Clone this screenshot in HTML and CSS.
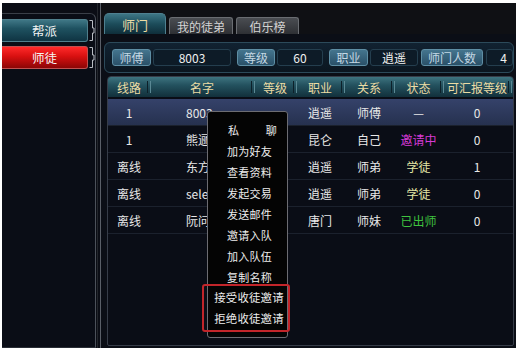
FILE: index.html
```html
<!DOCTYPE html>
<html lang="zh">
<head>
<meta charset="utf-8">
<link rel="stylesheet" href="styles.css">
</head>
<body>
<div class="screen">
  <aside class="side">
    <div class="side-box">
      <div class="nav-row">
        <div class="nav-btn teal">帮派</div>
        <svg class="bracket" width="6" height="23" viewBox="0 0 6 23"><path d="M0.5 1.5 H3.5 V9 H5 V14 H3.5 V21.5 H0.5" fill="none" stroke="#b8bcc2" stroke-width="1"/></svg>
      </div>
      <div class="nav-row">
        <div class="nav-btn red">师徒</div>
        <svg class="bracket" width="6" height="23" viewBox="0 0 6 23"><path d="M0.5 1.5 H3.5 V9 H5 V14 H3.5 V21.5 H0.5" fill="none" stroke="#b8bcc2" stroke-width="1"/></svg>
      </div>
    </div>
  </aside>
  <div class="gutter"></div>
  <main class="main">
    <div class="tabs">
      <div class="tab active">师门</div>
      <div class="tab">我的徒弟</div>
      <div class="tab">伯乐榜</div>
    </div>
    <div class="info">
      <span class="lbl w39">师傅</span>
      <span class="val w78">8003</span>
      <span class="lbl w38 ml">等级</span>
      <span class="val w46">60</span>
      <span class="lbl w39 ml">职业</span>
      <span class="val w48">逍遥</span>
      <span class="lbl w62">师门人数</span>
      <span class="val w27 right">4</span>
    </div>
    <div class="table">
      <div class="thead">
        <div class="th">线路</div>
        <div class="th">名字</div>
        <div class="th">等级</div>
        <div class="th">职业</div>
        <div class="th">关系</div>
        <div class="th">状态</div>
        <div class="th">可汇报等级</div>
        <div class="th last"></div>
      </div>
      <div class="tr sel">
        <div>1</div><div class="name">8003</div><div></div><div>逍遥</div><div>师傅</div><div>—</div><div>0</div><div></div>
      </div>
      <div class="tr">
        <div>1</div><div class="name">熊逦风</div><div></div><div>昆仑</div><div>自己</div><div class="magenta">邀请中</div><div>0</div><div></div>
      </div>
      <div class="tr">
        <div>离线</div><div class="name">东方月</div><div></div><div>逍遥</div><div>师弟</div><div class="pale">学徒</div><div>1</div><div></div>
      </div>
      <div class="tr">
        <div>离线</div><div class="name">selena</div><div></div><div>逍遥</div><div>师弟</div><div class="pale">学徒</div><div>0</div><div></div>
      </div>
      <div class="tr">
        <div>离线</div><div class="name">阮问天</div><div></div><div>唐门</div><div>师妹</div><div class="green">已出师</div><div>0</div><div></div>
      </div>
    </div>
  </main>
  <div class="menu">
    <div class="item just"><span>私</span><span>聊</span></div>
    <div class="item">加为好友</div>
    <div class="item">查看资料</div>
    <div class="item">发起交易</div>
    <div class="item">发送邮件</div>
    <div class="item">邀请入队</div>
    <div class="item">加入队伍</div>
    <div class="item">复制名称</div>
    <div class="hl">
      <div class="item">接受收徒邀请</div>
      <div class="item">拒绝收徒邀请</div>
    </div>
  </div>
</div>
</body>
</html>
```
FILE: styles.css
```css
* { box-sizing: border-box; }
html, body { margin: 0; padding: 0; background: #ffffff; }
body {
  width: 518px; height: 352px; overflow: hidden;
  font-family: "Noto Sans CJK SC", "Noto Sans", sans-serif;
  font-size: 12px; color: #e6e6e6;
}
.screen {
  position: relative;
  margin: 3px 2px 0 2px;
  width: 514px; height: 345px;
  background: #0b0d15;
  display: flex;
}
/* left side */
.side { width: 94px; padding-top: 10px; display: flex; }
.side-box {
  flex: 1;
  border-top: 1px solid #3a3f48;
  border-right: 1px solid #4c515a;
  border-bottom: 1px solid #2a2e36;
  border-top-right-radius: 6px;
  padding-top: 5px;
  display: flex; flex-direction: column; gap: 4px;
  background: #0a0d16;
}
.nav-row { display: flex; align-items: center; height: 23px; }
.nav-btn {
  width: 86px; height: 23px;
  display: flex; align-items: center; justify-content: center;
  color: #f4f4f4; font-size: 12.5px;
  border-radius: 0 3px 3px 0;
}
.nav-btn.teal {
  background: linear-gradient(#3f7786 0%, #1f5261 40%, #0f3442 100%);
  border: 1px solid #4f7f8c; border-left: none;
}
.nav-btn.red {
  background: linear-gradient(#ff2a2a 0%, #d81010 45%, #8c0606 100%);
  border: 1px solid #c05050; border-left: none;
}
.bracket { margin-left: 1px; }
.gutter {
  width: 5px;
  border-right: 1px solid #5a5f68;
  background: linear-gradient(90deg, #0b0d15 0 1px, #23262c 1px 2px, #0b0d15 2px);
}
/* main */
.main {
  flex: 1; display: flex; flex-direction: column;
  padding: 10px 2px 2px 3px;
  background: linear-gradient(#0f1014 0, #0f1014 31px, #0b0e16 31px);
}
.tabs {
  display: flex; align-items: flex-end; gap: 3px;
  height: 21px;
}
.tab {
  width: 64px; height: 17px;
  display: flex; align-items: center; justify-content: center;
  background: linear-gradient(#4a4d52, #2e3034);
  border: 1px solid #6a6d72; border-bottom: none;
  border-radius: 3px 3px 0 0;
  color: #d4d4d4; font-size: 12px;
}
.tab:nth-child(3) { width: 63px; }
.tab.active {
  width: 62px; height: 21px;
  background: linear-gradient(#3d7685 0%, #1c4c5a 50%, #0f2e3a 100%);
  border-color: #4f8090;
  color: #ecdca4; font-size: 13px;
  border-radius: 5px 5px 0 0;
}
.info {
  margin-top: 8px;
  height: 31px;
  border: 1px solid #2c4a5a;
  border-radius: 6px;
  background: linear-gradient(#112231, #0b1620);
  display: flex; align-items: center;
  padding-left: 7px;
  gap: 2px;
}
.lbl, .val {
  height: 17px;
  display: flex; align-items: center; justify-content: center;
  border-radius: 3px;
  font-size: 12px;
}
.lbl {
  background: linear-gradient(#44758e, #2a5068);
  border: 1px solid #5e8ea4;
  color: #c4d8e4;
}
.val {
  background: #0d1b27;
  border: 1px solid #243e4e;
  color: #f0f0f0;
}
.val.right { justify-content: flex-end; padding-right: 5px; }
.ml { margin-left: 4px; }
.w27 { width: 27px; } .w38 { width: 38px; } .w39 { width: 39px; }
.w46 { width: 46px; } .w48 { width: 48px; } .w62 { width: 62px; } .w78 { width: 78px; }
.lbl.w62 { margin-left: 1px; }
.val.w27 { margin-left: 1px; }

.table {
  margin: 3px 0 0 3px;
  flex: 1;
  border: 1px solid #363c48;
  border-radius: 4px 4px 2px 2px;
  background: #0a0d16;
  overflow: hidden;
}
.thead, .tr {
  display: grid;
  grid-template-columns: 42px 104px 42px 48px 50px 49px 68px 1fr;
}
.thead {
  height: 22px;
  background: linear-gradient(#3e7480 0%, #24525f 40%, #12303b 100%);
  border-bottom: 2px solid #0a0d16;
}
.th {
  position: relative;
  display: flex; align-items: center; justify-content: center;
  color: #ecdca4; font-size: 12px;
}
.th::after {
  content: ""; position: absolute; right: -1px; top: 4px; bottom: 4px;
  width: 2px;
  border-left: 1px solid #0d2029; border-right: 1px solid #5a8894;
}
.th.last::after { display: none; }
.tr {
  height: 27px;
  border-bottom: 1px solid #1b212d;
}
.tr > div {
  display: flex; align-items: center; justify-content: center;
  white-space: nowrap; overflow: hidden;
  color: #e8e8e8;
}
.tr > div.name { justify-content: flex-start; padding-left: 36px; }
.tr.sel { background: linear-gradient(#35426a, #26314f); }
.magenta { color: #d63ad6 !important; }
.pale { color: #e4e6a6 !important; }
.green { color: #3fc23f !important; }

/* context menu */
.menu {
  position: absolute;
  left: 205px; top: 108px;
  width: 81px; height: 227px;
  background: #040404;
  border: 1px solid #6c6c72;
  border-radius: 3px;
  padding-top: 7px;
  padding-left: 4px;
}
.item {
  height: 21px;
  display: flex; align-items: center; justify-content: center;
  color: #ededed; font-size: 11px; letter-spacing: 0.2px;
  white-space: nowrap;
}
.item.just { justify-content: space-between; padding: 0 10px 0 16px; }
.hl {
  margin: -3px -3px 0 -10px;
  padding-left: 6px;
  border: 2px solid #c2252a;
  border-radius: 3px;
  padding-top: 0; padding-bottom: 2px;
}
.hl .item { height: 21px; font-size: 11.4px; }
```
